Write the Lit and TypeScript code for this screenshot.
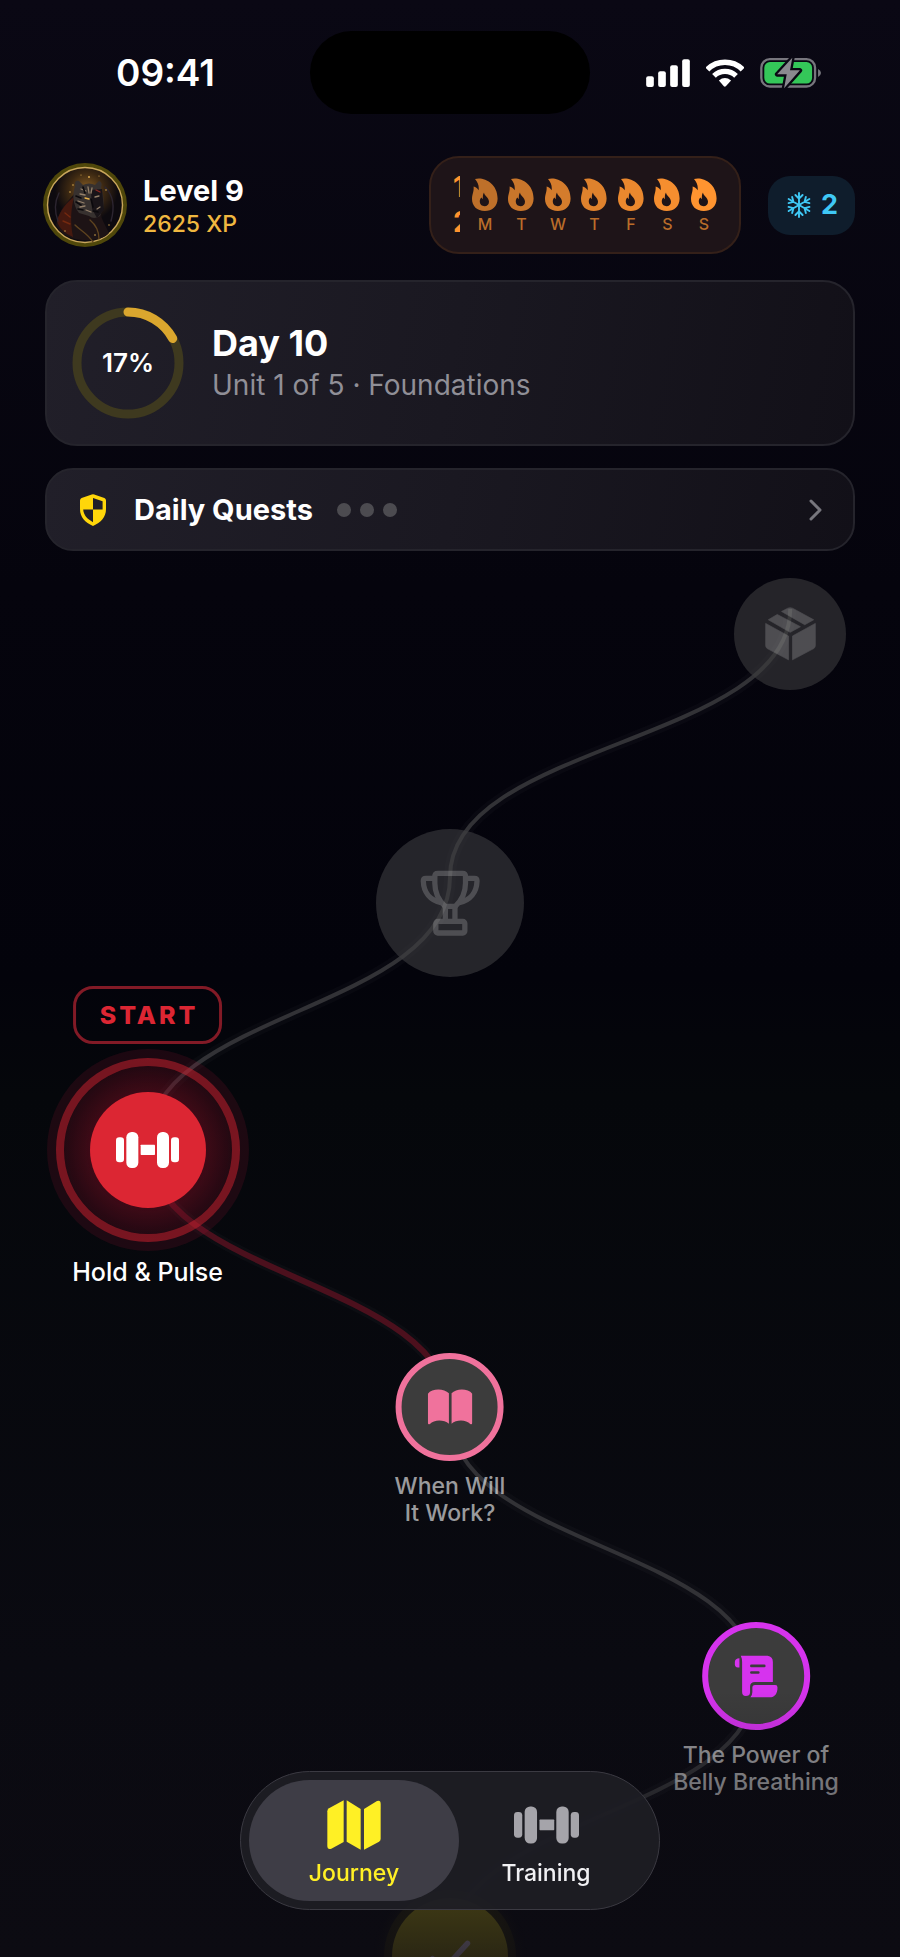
import { LitElement, html, css, svg } from "lit";
import { customElement, state } from "lit/decorators.js";
import { classMap } from "lit/directives/class-map.js";

const dumbbell = html`
  <svg class="dumbbell" viewBox="258 487 189 108" aria-hidden="true">
    <g fill="currentColor">
      <rect x="258" y="503" width="24" height="75" rx="10" />
      <rect x="289" y="487" width="36" height="108" rx="16" />
      <rect x="332" y="525" width="43" height="31" rx="2" />
      <rect x="381" y="487" width="36" height="108" rx="16" />
      <rect x="423" y="503" width="24" height="75" rx="10" />
    </g>
  </svg>`;

const box = html`
  <svg class="box" viewBox="1215 140 154 162" aria-hidden="true">
    <g fill="currentColor" stroke="currentColor" stroke-width="2" stroke-linejoin="round">
      <path d="M1217 189 L1286 227 V299 L1222 265 Q1217 262 1217 256Z" />
      <path d="M1298 227 L1367 189 V256 Q1367 262 1362 265 L1298 299Z" />
      <path d="M1225 178 L1252 162 L1322 199 L1291 216Z" />
      <path d="M1265 153 L1284 143 Q1291 140 1298 143 L1362 178 L1335 193Z" />
    </g>
  </svg>`;

const trophy = html`
  <svg class="trophy" viewBox="178 929 182 198" aria-hidden="true">
    <g fill="none" stroke="currentColor" stroke-width="16" stroke-linejoin="round">
      <path d="M232 938 H307 Q316 938 316 947 V968 C316 1000 302 1022 285 1038 H254 C237 1022 223 1000 223 968 V947 Q223 938 232 938Z" />
      <path d="M223 953 H196 Q188 953 188 961 C189 995 208 1020 242 1027" />
      <path d="M316 953 H343 Q351 953 351 961 C350 995 331 1020 297 1027" />
      <path d="M255 1036 V1084 M284 1036 V1084" />
      <rect x="226" y="1084" width="88" height="35" rx="6" />
    </g>
  </svg>`;

const book = html`
  <svg class="book" viewBox="173 179 135 108" aria-hidden="true">
    <g fill="currentColor">
      <path d="M174 193 C186 177 222 176 237 192 V283 C222 270 192 270 180 284 Q174 287 174 280Z" />
      <path d="M307 193 C295 177 259 176 245 192 V283 C259 270 289 270 301 284 Q307 287 307 280Z" />
    </g>
  </svg>`;

const scroll = html`
  <svg class="scroll" viewBox="1094 974 131 130" aria-hidden="true">
    <g fill="currentColor">
      <path d="M1109 984 V1012 H1104 Q1095 1011 1095 1002 V995 Q1096 984 1109 984Z" />
      <path fill-rule="evenodd" d="M1113 976 H1194 Q1210 978 1210 995 V1056 H1156 Q1141 1056 1141 1070 V1088 Q1140 1098 1128 1098 Q1117 1098 1117 1086 V995 Q1117 984 1113 976Z
        M1145 1003 Q1141 1003 1141 1007 Q1141 1011 1145 1011 H1184 Q1188 1011 1188 1007 Q1188 1003 1184 1003Z
        M1145 1023 Q1141 1023 1141 1027 Q1141 1031 1145 1031 H1166 Q1170 1031 1170 1027 Q1170 1023 1166 1023Z" />
      <path d="M1156 1065 H1217 Q1224 1065 1224 1072 C1224 1090 1216 1102 1200 1102 H1142 Q1148 1095 1148 1086 V1073 Q1148 1065 1156 1065Z" />
    </g>
  </svg>`;

const check = html`
  <svg class="check" viewBox="0 0 40 32" aria-hidden="true">
    <path d="M4 18 L14 28 L36 4" fill="none" stroke="currentColor" stroke-width="5" stroke-linecap="round" stroke-linejoin="round" />
  </svg>`;

const map = html`
  <svg class="map" viewBox="319 150 162 150" aria-hidden="true">
    <g fill="currentColor">
      <path d="M320 184 Q320 178 325 175 L369 151 V276 L332 296 Q320 300 320 288Z" />
      <path d="M378 151 L420 177 V299 L378 275Z" />
      <path d="M430 177 L469 153 Q480 149 480 161 V266 Q480 272 475 275 L430 299Z" />
    </g>
  </svg>`;

const flame = html`
  <svg class="flame" viewBox="0 0 26 33" aria-hidden="true">
    <path fill="currentColor" fill-rule="evenodd" d="M3 1 C11 -1.5 25.5 4.5 25.6 20.5 C25.6 28.5 20 33 12.8 33 C5 33 0 28 0 21 C0 16 2 14.5 1.6 8.5 C3.6 9 5.2 10.2 6.6 12.2 C7.2 8 6 4.4 3 1Z
      M12 14.6 C12.2 18.2 17 19.4 17 23.8 C17 26.8 15 28.2 12.6 28.2 C10 28.2 7.8 26.5 7.8 23.6 C7.8 21.8 8.4 20.4 9.4 19.6 L10.8 21.2 C10.9 19 10.6 16.4 12 14.6Z" />
  </svg>`;

const snowflake = html`
  <svg class="snowflake" viewBox="-13 -13 26 26" aria-hidden="true">
    <g fill="none" stroke="currentColor" stroke-width="1.9" stroke-linecap="round">
      ${[0, 60, 120, 180, 240, 300].map(
        (a) => svg`<path transform="rotate(${a})" d="M0 0 V-12 M-3.6 -10 L0 -6.4 L3.6 -10" />`
      )}
    </g>
  </svg>`;

const avatar = html`
  <svg class="portrait" viewBox="0 0 84 84" role="img" aria-label="Tiger avatar">
    <defs>
      <radialGradient id="halo" cx="52%" cy="30%" r="42%">
        <stop offset="0" stop-color="#8a5f24" />
        <stop offset=".55" stop-color="#3c2812" />
        <stop offset="1" stop-color="#0d0a0f" />
      </radialGradient>
    </defs>
    <circle cx="42" cy="42" r="42" fill="#4f470a" />
    <circle cx="42" cy="42" r="37.5" fill="url(#halo)" stroke="#c9a65c" stroke-width="1.4" />
    <path d="M13 62 C16 46 25 38 32 30 L53 26 C58 36 56 50 60 58 L66 70 C58 80 28 80 17 68Z" fill="#1d1315" />
    <path d="M14 58 C17 47 25 38 31 34 C28 46 27 58 30 74 C22 70 16 66 14 58Z" fill="#45190f" />
    <path d="M32 23 Q31 17 36 18 L40 22 Q46 19 52 22 L56 18 Q60 19 58 25 C61 32 61 40 60 46 L57 53 Q51 57 46 53 L36 50 C30 42 29 32 32 23Z" fill="#37312f" />
    <path d="M48 27 L59 26 L61 47 L54 55 L49 46Z" fill="#191418" />
    <g fill="none" stroke="#94806a" stroke-width="1.3" stroke-linecap="round">
      <path d="M38 26 L43 28 M37 31 L42 32 M45 24 L46 30 M49 25 L48 30 M35 38 L41 40 M37 44 L42 43 M43 47 L48 49 M52 34 L56 33 M54 46 L57 44" />
      <path d="M42 35 L46 36" stroke="#e4b04a" />
      <path d="M53 27 L57 29" stroke="#8c2722" />
    </g>
    <g fill="none" stroke="#0b090c" stroke-width="1.6" stroke-linecap="round">
      <path d="M33 33 L38 35 M33 39 L38 42 M35 46 L40 47 M40 24 L42 30 M48 36 L50 44 M50 48 L55 49" />
    </g>
    <g fill="none" stroke-width="1.4" stroke-linecap="round">
      <path d="M22 50 L27 54 M20 58 L27 61" stroke="#74290f" />
      <path d="M32 62 C38 68 44 70 50 79 M47 57 C53 62 56 68 56 76" stroke="#5e431f" />
      <path d="M62 24 C70 32 72 44 68 58 M16 30 C11 40 12 50 15 58" stroke="#2c2530" />
    </g>
    <g fill="#d9a94e">
      <circle cx="46" cy="14" r="1" /><circle cx="30" cy="22" r=".8" /><circle cx="27" cy="29" r=".8" />
      <circle cx="63" cy="27" r=".8" /><circle cx="66" cy="62" r=".7" /><circle cx="22" cy="68" r=".7" />
      <circle cx="38" cy="12" r=".6" /><circle cx="56" cy="13" r=".6" /><circle cx="52" cy="72" r=".8" />
    </g>
  </svg>`;

const icons = { dumbbell, box, trophy, book, scroll, check };

interface Stop {
  kind: "locked" | "boss" | "active" | "lesson" | "done";
  icon: keyof typeof icons;
  x: number;
  y: number;
  name: string;
  label?: string[];
  accent?: string;
}

/* x is a share of the trail's width, y the centre in pixels from its top. */
const stops: Stop[] = [
  { kind: "locked", icon: "box", x: 87.8, y: 83, name: "Reward box" },
  { kind: "boss", icon: "trophy", x: 50, y: 352, name: "Unit trophy" },
  { kind: "active", icon: "dumbbell", x: 16.4, y: 599, name: "Hold & Pulse", label: ["Hold & Pulse"] },
  { kind: "lesson", icon: "book", x: 50, y: 856, name: "When Will It Work?", label: ["When Will", "It Work?"], accent: "#f0729c" },
  { kind: "lesson", icon: "scroll", x: 84, y: 1125, name: "The Power of Belly Breathing", label: ["The Power of", "Belly Breathing"], accent: "#d633ee" },
  { kind: "done", icon: "check", x: 50, y: 1405, name: "Completed lesson" },
];

const FIRST = 58;
const STEP = 268;

@customElement("status-bar")
class StatusBar extends LitElement {
  static styles = css`
    :host { display: grid; grid-template-columns: 1fr 280px 1fr; align-items: center; padding: 31px 0 42px; }
    .time { padding-left: 116px; font-size: 37px; line-height: 44px; font-weight: 600; }
    .island { height: 83px; border-radius: 42px; background: #000; }
    .signals { display: flex; justify-content: flex-end; align-items: center; gap: 16px; padding-right: 79px; }
    .cell { width: 44px; height: 28px; }
    .wifi { width: 38px; height: 28px; }
    .battery { width: 61px; height: 32px; }
  `;
  render() {
    return html`
      <div class="time">09:41</div>
      <div class="island"></div>
      <div class="signals">
        <svg class="cell" viewBox="46 56 131 84" role="img" aria-label="Signal">
          <g fill="#fff">
            <rect x="46" y="108" width="23" height="32" rx="6" /><rect x="82" y="93" width="23" height="47" rx="6" />
            <rect x="118" y="75" width="23" height="65" rx="6" /><rect x="154" y="57" width="23" height="83" rx="6" />
          </g>
        </svg>
        <svg class="wifi" viewBox="227 56 113 85" role="img" aria-label="Wi-Fi">
          <g fill="none" stroke="#fff" stroke-width="17">
            <path d="M230 88 A76 76 0 0 1 337 88" />
            <path d="M250 107 A48 48 0 0 1 317 107" stroke-width="16" />
          </g>
          <path d="M265 121 Q283 107 302 121 L286 139 Q283 142 280 139Z" fill="#fff" />
        </svg>
        <svg class="battery" viewBox="389 51 185 96" role="img" aria-label="Battery charging">
          <rect x="393" y="57" width="163" height="83" rx="26" fill="none" stroke="#77767d" stroke-width="7" />
          <rect x="402" y="66" width="145" height="65" rx="17" fill="#34c759" />
          <path d="M565 87 Q574 92 574 99 Q574 106 565 111Z" fill="#77767d" />
          <path d="M487 53 L441 103 H470 L462 145 L510 91 H480Z" fill="#8a898f" stroke="#0a0813" stroke-width="14" stroke-linejoin="round" paint-order="stroke" />
        </svg>
      </div>`;
  }
}

@customElement("profile-header")
class ProfileHeader extends LitElement {
  static styles = css`
    :host { display: flex; align-items: center; }
    .portrait { width: 84px; height: 84px; flex: none; }
    .who { margin-left: 16px; margin-right: auto; padding-top: 3px; }
    .level { font-size: 29px; line-height: 34px; font-weight: 700; }
    .xp { font-size: 23px; line-height: 32px; font-weight: 500; color: #f0b740; }
    .streak { display: flex; align-items: center; gap: 12px; box-sizing: border-box; height: 98px; padding: 0 22px; border: 2px solid #342019; border-radius: 30px; background: #1e1418; color: #ff932e; }
    .count { width: 7px; overflow: hidden; word-break: break-all; font-size: 28px; line-height: 35px; font-weight: 700; }
    .week { display: flex; justify-content: space-between; width: 245px; margin: 0; padding: 0; list-style: none; }
    .day { display: grid; justify-items: center; gap: 3px; width: 26px; padding-top: 1px; }
    .flame { width: 26px; height: 33px; }
    .letter { font-size: 16px; line-height: 20px; font-weight: 500; color: #b96d2a; }
    .freeze { display: flex; align-items: center; gap: 9px; box-sizing: border-box; height: 59px; margin-left: 27px; padding: 0 17px 0 18px; border-radius: 22px; background: #0f1d2c; color: #3fc8f5; font-size: 27px; line-height: 34px; font-weight: 700; }
    .snowflake { width: 26px; height: 26px; }
  `;
  render() {
    const days = ["M", "T", "W", "T", "F", "S", "S"];
    return html`
      ${avatar}
      <div class="who">
        <div class="level">Level 9</div>
        <div class="xp">2625 XP</div>
      </div>
      <div class="streak">
        <div class="count">12</div>
        <ul class="week">
          ${days.map(
            (d, i) => html`<li class="day" style="color:rgb(${190 + i * 11},${112 + i * 6},${42 + i})">${flame}<span class="letter">${d}</span></li>`
          )}
        </ul>
      </div>
      <div class="freeze">${snowflake}<span>2</span></div>`;
  }
}

@customElement("journey-trail")
class JourneyTrail extends LitElement {
  static styles = css`
    :host { display: block; position: relative; overflow: hidden; min-height: 1406px; }
    .lines { position: absolute; top: 0; left: 0; width: 100%; height: 1500px; }
    .lines path { fill: none; vector-effect: non-scaling-stroke; }
    .halo { stroke: rgba(255, 255, 255, 0.025); stroke-width: 12; }
    .line { stroke: #323236; stroke-width: 4; }
    .line.live { stroke: #4c101d; stroke-width: 6; }
    .stop { position: absolute; display: grid; justify-items: center; transform: translateX(-50%); }
    button { display: grid; place-items: center; box-sizing: border-box; padding: 0; border: 0; border-radius: 50%; font: inherit; color: #fff; cursor: pointer; }
    .locked button { width: 112px; height: 112px; margin-top: -56px; background: rgba(60, 60, 62, 0.58); }
    .boss button { width: 148px; height: 148px; margin-top: -74px; background: rgba(62, 62, 66, 0.58); }
    .locked svg, .boss svg { opacity: 0.19; }
    .lesson button { width: 108px; height: 108px; margin-top: -54px; border: 6px solid var(--accent); background: #3c3c3c; color: var(--accent); }
    .active .aura { display: grid; place-items: center; width: 202px; height: 202px; margin-top: -101px; border-radius: 50%; background: rgba(190, 20, 60, 0.13); }
    .active .ring { display: grid; place-items: center; box-sizing: border-box; width: 184px; height: 184px; border: 8px solid rgba(220, 38, 50, 0.46); border-radius: 50%; background: radial-gradient(closest-side, rgba(130, 14, 34, 0.4) 60%, rgba(60, 10, 20, 0.2) 100%); }
    .active button { width: 116px; height: 116px; background: #dc2633; }
    .done button { width: 116px; height: 116px; margin-top: -58px; background: #857a18; color: #b5a5b8; box-shadow: 0 0 0 8px rgba(170, 155, 10, 0.12), 0 0 12px 10px rgba(170, 155, 10, 0.08); }
    .start { position: absolute; bottom: 100%; left: 50%; box-sizing: border-box; height: 58px; margin-bottom: 106px; padding: 0 21px 0 24px; border: 3px solid #821a26; border-radius: 20px; transform: translateX(-50%); color: #dc2633; font-size: 25px; line-height: 52px; font-weight: 800; letter-spacing: 3px; }
    .label { margin-top: 12px; font-size: 23px; line-height: 27px; font-weight: 500; text-align: center; white-space: nowrap; color: rgba(255, 255, 255, 0.6); }
    .label span { display: block; }
    .active .label { margin-top: 8px; font-size: 25px; color: #fff; }
    .box { width: 51px; height: 54px; }
    .trophy { width: 60px; height: 66px; }
    .dumbbell { width: 63px; height: 36px; }
    .book { width: 45px; height: 36px; }
    .scroll { width: 44px; height: 43px; }
    .check { width: 44px; height: 35px; }
    .fade { position: absolute; left: 0; right: 0; top: 1140px; bottom: 0; pointer-events: none; background: linear-gradient(rgba(12, 11, 18, 0), rgba(12, 11, 18, 0.75)); }
  `;
  private curve(i: number) {
    const a = stops[i];
    const b = stops[i + 1];
    const y0 = FIRST + STEP * i;
    return `M${a.x} ${y0} C${a.x} ${y0 + STEP / 2} ${b.x} ${y0 + STEP / 2} ${b.x} ${y0 + STEP}`;
  }
  render() {
    return html`
      <svg class="lines" viewBox="0 0 100 1500" preserveAspectRatio="none" aria-hidden="true">
        ${stops.slice(1).map((_, i) => {
          const d = this.curve(i);
          return svg`<path class="halo" d=${d} /><path class=${classMap({ line: true, live: i === 2 })} d=${d} />`;
        })}
      </svg>
      ${stops.map((s) => {
        const button = html`<button aria-label=${s.name}>${icons[s.icon]}</button>`;
        return html`
          <div class="stop ${s.kind}" style="left:${s.x}%;top:${s.y}px;--accent:${s.accent ?? "#fff"}">
            ${s.kind === "active"
              ? html`<div class="start">START</div><div class="aura"><div class="ring">${button}</div></div>`
              : button}
            ${s.label ? html`<div class="label">${s.label.map((l) => html`<span>${l}</span>`)}</div>` : ""}
          </div>`;
      })}
      <div class="fade"></div>`;
  }
}

@customElement("tab-bar")
class TabBar extends LitElement {
  @state() private current = "Journey";
  static styles = css`
    :host { position: fixed; left: 0; right: 0; bottom: 47px; display: flex; justify-content: center; pointer-events: none; }
    nav { display: flex; box-sizing: border-box; height: 139px; padding: 8px; border: 1px solid #3b3a42; border-radius: 70px; background: rgba(30, 29, 36, 0.95); pointer-events: auto; }
    a { display: grid; grid-template-rows: 54px 28px; justify-items: center; align-items: center; align-content: center; row-gap: 7px; box-sizing: border-box; width: 210px; padding-top: 3px; border-radius: 62px; color: #f1f1f4; font-size: 23px; line-height: 28px; font-weight: 500; text-decoration: none; }
    a + a { width: 192px; padding-right: 18px; }
    .on { background: #3e3d46; color: #fff025; }
    .map { width: 54px; height: 50px; }
    .dumbbell { width: 65px; height: 38px; color: #a5a4aa; }
  `;
  render() {
    const tab = (name: string, icon: unknown) => html`
      <a href="#${name.toLowerCase()}" class=${classMap({ on: this.current === name })} @click=${() => (this.current = name)}>
        ${icon}<span>${name}</span>
      </a>`;
    return html`<nav aria-label="Main">${tab("Journey", map)}${tab("Training", dumbbell)}</nav>`;
  }
}

@customElement("app-root")
class AppRoot extends LitElement {
  static styles = css`
    :host {
      display: flex; flex-direction: column; min-height: 100vh; color: #fff;
      font-family: Inter, "Open Sans", sans-serif;
      background: linear-gradient(#0a0814 0%, #05040d 30%, #03030b 50%, #05070b 56%, #0a0a11 85%, #0c0b12 100%);
    }
    .top { display: grid; padding: 0 45px 0 43px; }
    .cards { display: grid; gap: 22px; padding: 26px 45px 0; }
    .card { display: flex; align-items: center; box-sizing: border-box; border: 2px solid #25242c; color: inherit; font: inherit; text-align: left; background: linear-gradient(100deg, #211f29 0%, #1a1821 50%, #121018 100%); }
    .progress { gap: 28px; height: 166px; padding: 0 24px 0 25px; border-radius: 32px; }
    .ring { display: grid; place-items: center; width: 112px; height: 112px; }
    .ring > * { grid-area: 1 / 1; }
    .percent { font-size: 26px; line-height: 32px; font-weight: 600; }
    .day { padding-top: 2px; font-size: 36px; line-height: 42px; font-weight: 700; }
    .unit { font-size: 28px; line-height: 42px; color: #908f97; }
    .quests { width: 100%; height: 83px; padding: 0 30px 0 33px; border-radius: 28px; cursor: pointer; }
    .shield { width: 26px; height: 32px; }
    .title { margin-left: 28px; font-size: 29px; line-height: 34px; font-weight: 700; }
    .dots { display: flex; gap: 9px; margin-left: 24px; margin-right: auto; }
    .dot { width: 14px; height: 14px; border-radius: 50%; background: #4c4b50; }
    .chevron { width: 15px; height: 24px; }
    journey-trail { flex: 1; }
  `;
  render() {
    return html`
      <status-bar></status-bar>
      <div class="top"><profile-header></profile-header></div>
      <div class="cards">
        <section class="card progress">
          <div class="ring">
            <svg width="112" height="112" viewBox="0 0 112 112" aria-hidden="true">
              <g fill="none" stroke-width="9" transform="rotate(-90 56 56)">
                <circle cx="56" cy="56" r="51" stroke="#3e391f" />
                <circle cx="56" cy="56" r="51" stroke="#daa62e" stroke-linecap="round" pathLength="100" stroke-dasharray="17 83" />
              </g>
            </svg>
            <div class="percent">17%</div>
          </div>
          <div>
            <div class="day">Day 10</div>
            <div class="unit">Unit 1 of 5 · Foundations</div>
          </div>
        </section>
        <button class="card quests">
          <svg class="shield" viewBox="0 0 26 32" aria-hidden="true">
            <path fill="#ffd60a" fill-rule="evenodd" d="M11.8 .4 Q13 0 14.2 .4 L24.4 4 Q26 4.6 26 6.4 V15 C26 23 21 28.5 13 32 C5 28.5 0 23 0 15 V6.4 Q0 4.6 1.6 4Z
              M13 4 V15.6 H22.6 V7.2Z M13 15.6 H3.2 C3.6 21 7 25 13 28.2Z" />
          </svg>
          <span class="title">Daily Quests</span>
          <span class="dots"><span class="dot"></span><span class="dot"></span><span class="dot"></span></span>
          <svg class="chevron" viewBox="0 0 15 24" aria-hidden="true">
            <path d="M3 3 L12 12 L3 21" fill="none" stroke="#77767d" stroke-width="3" stroke-linecap="round" stroke-linejoin="round" />
          </svg>
        </button>
      </div>
      <journey-trail></journey-trail>
      <tab-bar></tab-bar>`;
  }
}
